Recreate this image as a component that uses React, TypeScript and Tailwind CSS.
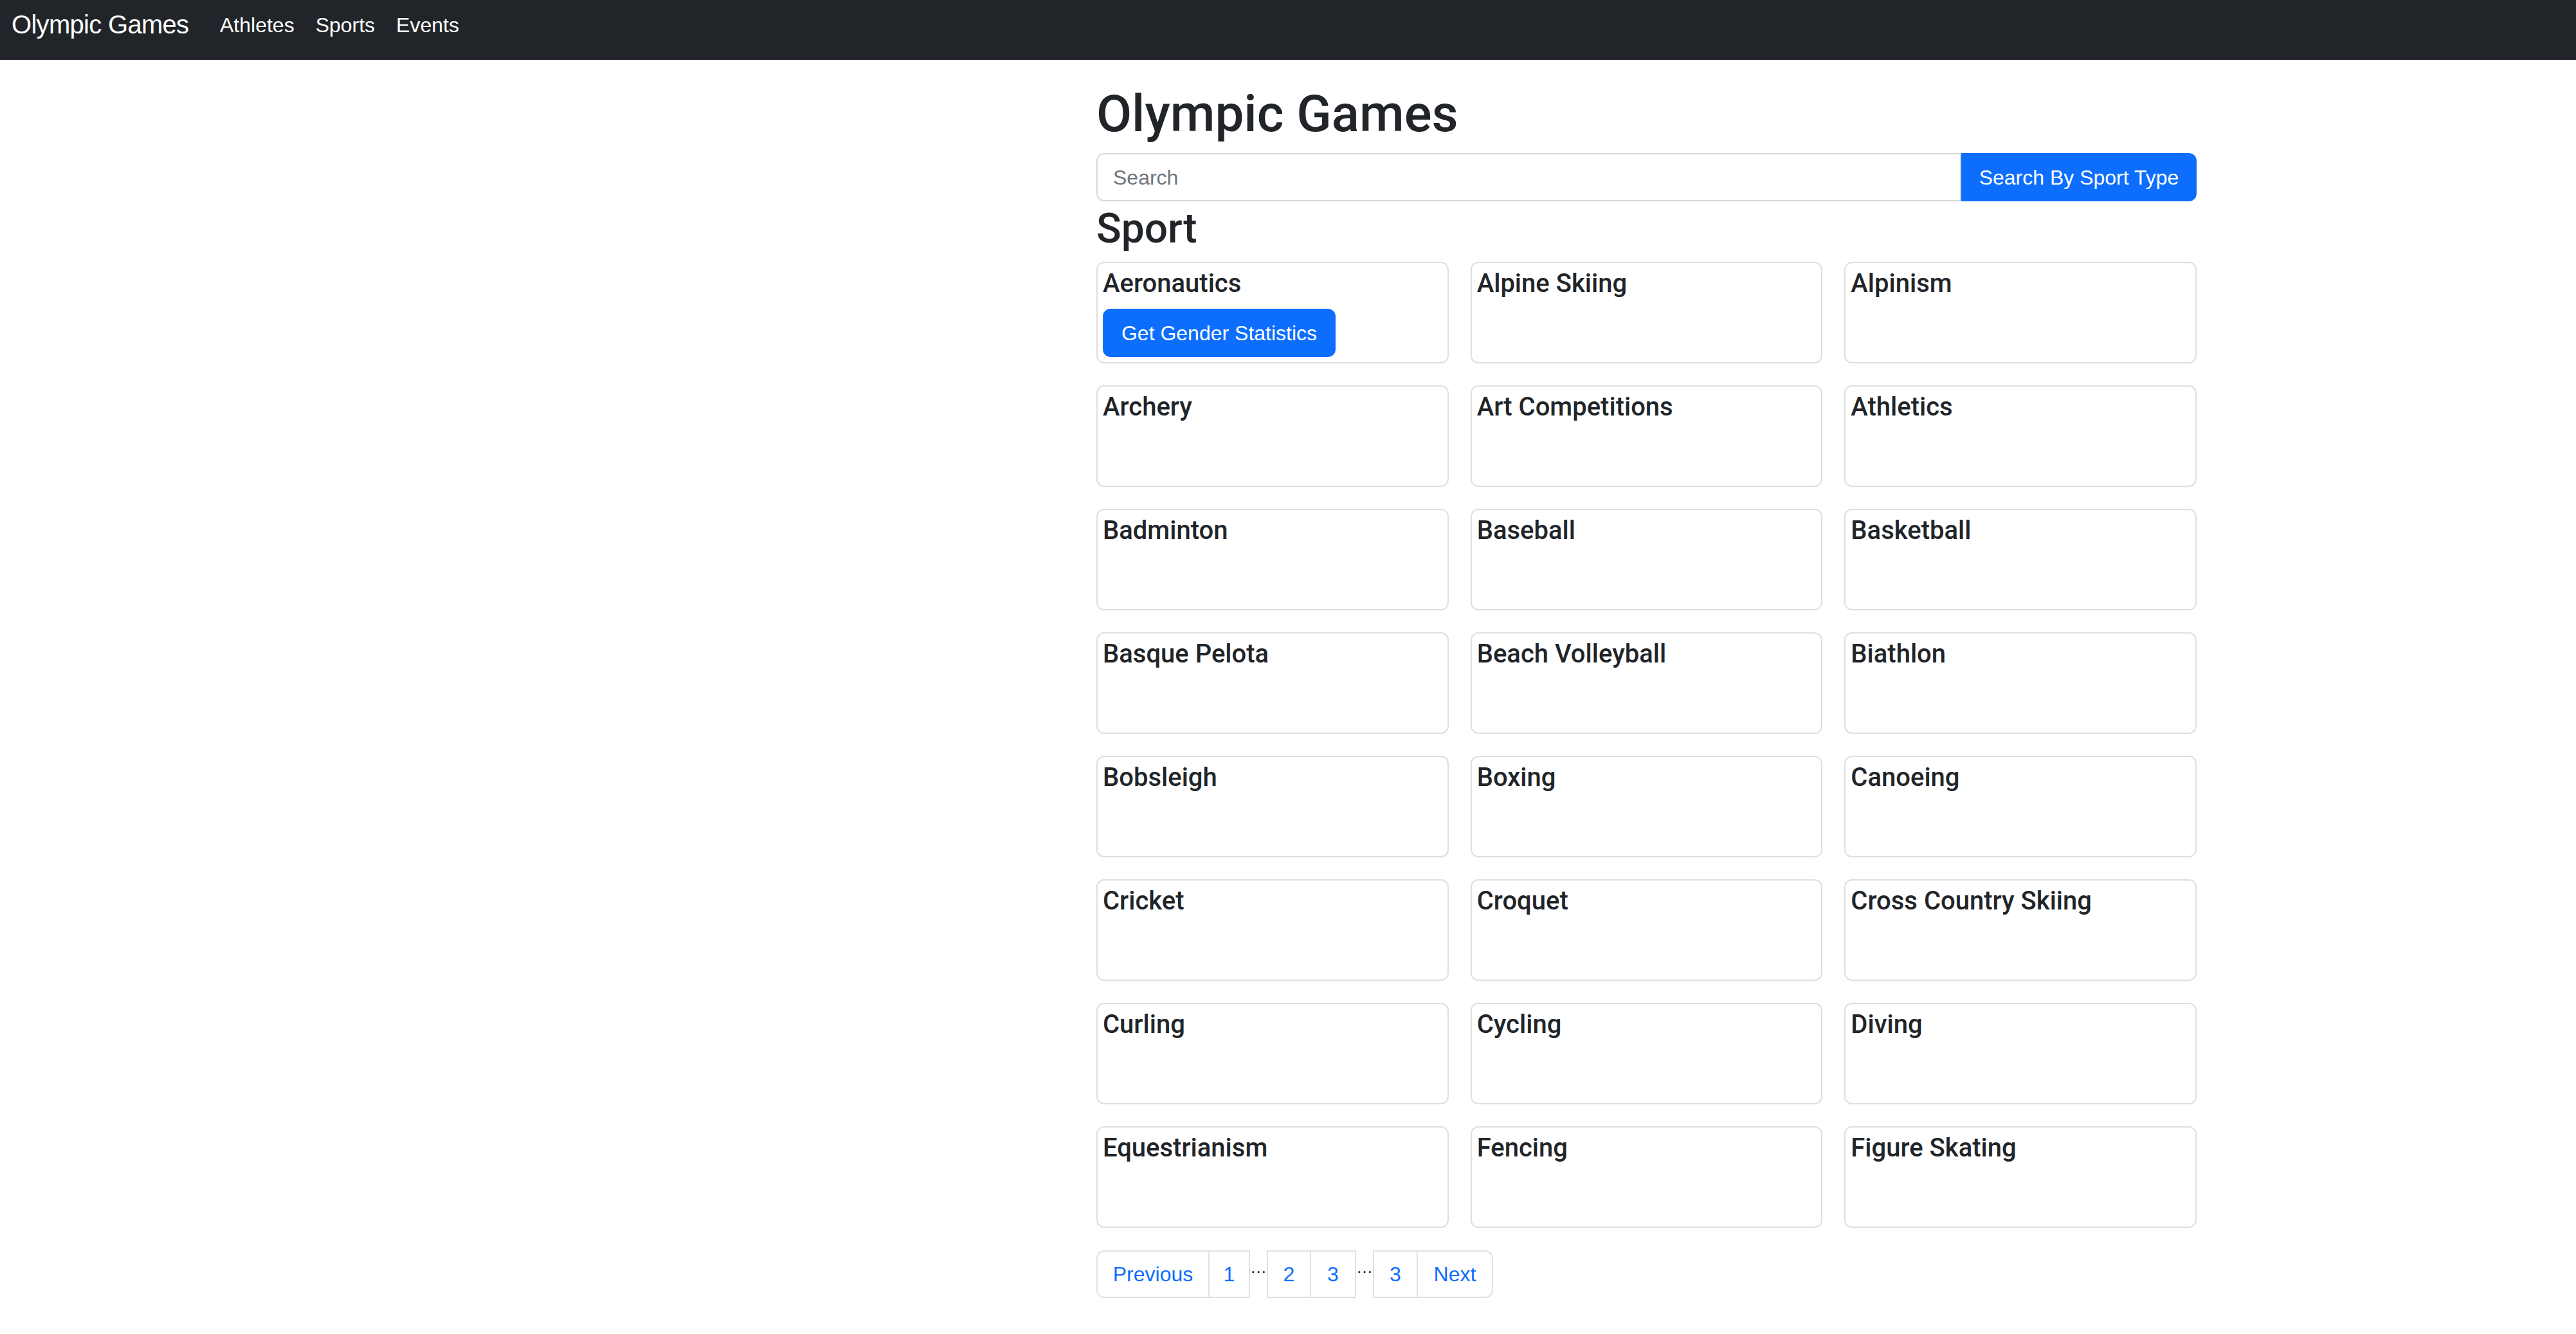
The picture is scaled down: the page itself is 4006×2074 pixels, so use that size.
import React from "react";

const sports = [
  "Aeronautics",
  "Alpine Skiing",
  "Alpinism",
  "Archery",
  "Art Competitions",
  "Athletics",
  "Badminton",
  "Baseball",
  "Basketball",
  "Basque Pelota",
  "Beach Volleyball",
  "Biathlon",
  "Bobsleigh",
  "Boxing",
  "Canoeing",
  "Cricket",
  "Croquet",
  "Cross Country Skiing",
  "Curling",
  "Cycling",
  "Diving",
  "Equestrianism",
  "Fencing",
  "Figure Skating",
];

const sans = "font-['Liberation_Sans',Arial,sans-serif]";
const med = "font-['Roboto','Liberation_Sans',sans-serif] font-medium";

function Ellipsis() {
  return (
    <span className="w-[26px] self-start mt-[13px] text-[26px] leading-none text-[#212529] text-center">
      …
    </span>
  );
}

export default function App() {
  return (
    <div className={`min-h-screen bg-white text-[#212529] ${sans}`}>
      <nav className="h-[93px] bg-[#212529] flex items-start pl-[18px]">
        <div className="w-[324px] mt-[14px] text-[40px] leading-[48px] tracking-[-0.7px] text-white">
          Olympic Games
        </div>
        <div className="flex gap-[33px] mt-[20px] text-[32px] leading-[38px] text-white">
          <span>Athletes</span>
          <span>Sports</span>
          <span>Events</span>
        </div>
      </nav>

      <main className="ml-[1705px] w-[1711px]">
        <h1 className={`${med} mt-[36px] mb-[13px] text-[80px] leading-[96px]`}>
          Olympic Games
        </h1>

        <div className="flex h-[75px]">
          <div className="flex-1 flex items-center border-2 border-[#d5d9dd] rounded-l-[12px] pl-[24px] text-[32px] text-[#6c757d]">
            Search
          </div>
          <div className="w-[366px] flex items-center justify-center bg-[#0d6efd] rounded-r-[12px] text-[32px] text-white">
            Search By Sport Type
          </div>
        </div>

        <h2 className={`${med} mt-[4px] mb-[13px] text-[64px] leading-[77px]`}>Sport</h2>

        <div className="grid grid-cols-3 gap-x-[34px] gap-y-[34px]">
          {sports.map((s, i) => (
            <div
              key={s}
              className="h-[158px] border-2 border-[#dfdfdf] rounded-[12px] p-2 flex flex-col items-start"
            >
              <div className={`${med} text-[40px] leading-[48px]`}>{s}</div>
              {i === 0 && (
                <div className="mt-[15px] h-[76px] w-[362px] flex items-center justify-center bg-[#0d6efd] rounded-[12px] text-[32px] text-white">
                  Get Gender Statistics
                </div>
              )}
            </div>
          ))}
        </div>

        <div className="flex h-[74px] mt-[35px] mb-[40px] text-[32px] text-[#0d6efd]">
          <div className="w-[176px] flex items-center justify-center border-2 border-[#dee2e6] rounded-l-[12px]">
            Previous
          </div>
          <div className="w-[63px] flex items-center justify-center border-y-2 border-r-2 border-[#dee2e6]">
            1
          </div>
          <Ellipsis />
          <div className="w-[69px] flex items-center justify-center border-2 border-[#dee2e6]">
            2
          </div>
          <div className="w-[70px] flex items-center justify-center border-y-2 border-r-2 border-[#dee2e6]">
            3
          </div>
          <Ellipsis />
          <div className="w-[70px] flex items-center justify-center border-2 border-[#dee2e6]">
            3
          </div>
          <div className="w-[117px] flex items-center justify-center border-y-2 border-r-2 border-[#dee2e6] rounded-r-[12px]">
            Next
          </div>
        </div>
      </main>
    </div>
  );
}
